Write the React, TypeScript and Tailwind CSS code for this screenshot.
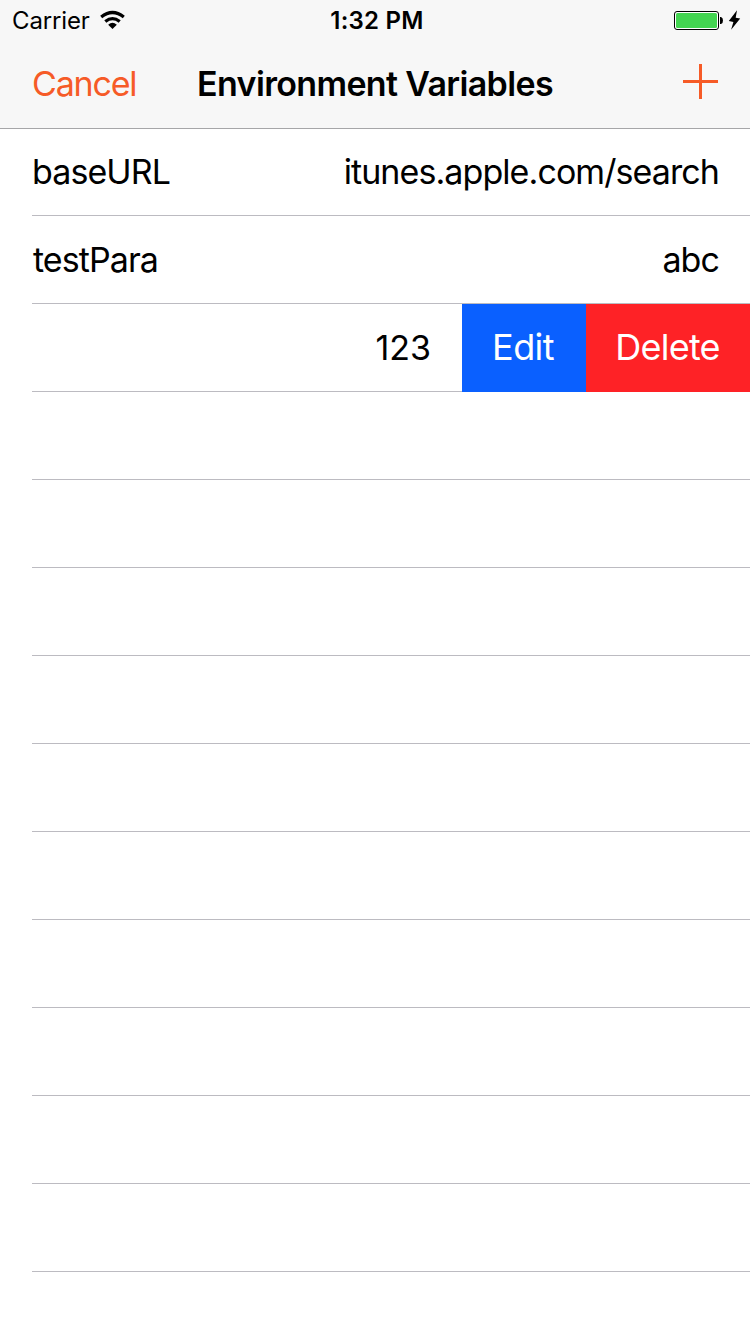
const rows = [
  { name: 'baseURL', value: 'itunes.apple.com/search' },
  { name: 'testPara', value: 'abc' },
];

export default function App() {
  return (
    <div className="flex h-[1334px] w-[750px] flex-col overflow-hidden bg-white font-['Inter',sans-serif] text-black">
      <header className="h-[129px] border-b border-[#a6a6a8] bg-[#f7f7f7]">
        <div className="grid h-10 grid-cols-3 items-center pl-3 pr-[9px]">
          <div className="flex items-center gap-[10px]">
            <span className="pt-[2px] text-[24px] leading-[38px] tracking-[-0.15px]">Carrier</span>
            <svg width="26" height="20" viewBox="100 10 26 20" fill="none" stroke="#000" strokeWidth="3.200">
              <path d="M101.200 17q11.300-9 22.600 0M105.300 21.500q7.200-5.800 14.400 0" />
              <path d="M112.500 29l-4.300-4.300q4.300-3.800 8.600 0z" fill="#000" stroke="none" />
            </svg>
          </div>
          <span className="pl-px pt-[2px] text-center text-[24px] font-semibold leading-[38px] tracking-[0.25px]">1:32 PM</span>
          <svg className="justify-self-end" width="68" height="22" viewBox="673 9 68 22">
            <rect x="674.5" y="11.5" width="44" height="18" rx="2.500" fill="#fff" stroke="#000" />
            <rect x="676" y="13" width="41" height="15" rx="1.500" fill="#43d551" />
            <path d="M720 17h1q2 .5 2 3.500t-2 3.500h-1z" />
            <path d="M737 10.200L728.800 21l4.600.9-2.300 7.900 9.100-11.200-4.500-.9z" />
          </svg>
        </div>
        <div className="grid h-[88px] grid-cols-[1fr_auto_1fr] items-center px-8">
          <span className="pb-px text-[34px] tracking-[-1.2px] text-[#f65b27]">Cancel</span>
          <h1 className="pb-px text-[34px] font-semibold tracking-[-0.65px]">Environment Variables</h1>
          <svg className="mb-[5px] justify-self-end" width="35" height="35" stroke="#f65b27" strokeWidth="3"><path d="M0 17.500h35M17.500 0v35" /></svg>
        </div>
      </header>
      <main className="flex flex-col">
        {rows.map((row, i) => (
          <div key={row.name} className={`ml-8 flex items-center justify-between border-b border-[#bcbbc1] pr-[31px] text-[34px] tracking-[-0.92px] ${i === 0 ? 'h-[87px] pb-px' : 'h-[88px] pl-px'}`}>
            <span>{row.name}</span><span>{row.value}</span>
          </div>
        ))}
        <div className="flex h-[88px] pl-8 text-[34px]">
          <div className="flex w-[430px] items-center justify-end border-b border-[#bcbbc1] pr-[31px]">123</div>
          <button className="w-[124px] bg-[#0a60ff] pb-[2px] pr-[2px] text-[36px] tracking-[-0.6px] text-white">Edit</button>
          <button className="w-[164px] bg-[#fe2226] pb-[2px] pr-px text-[36px] tracking-[-0.75px] text-white">Delete</button>
        </div>
        {Array.from({ length: 10 }, (_, i) => <div key={i} className="ml-8 h-[88px] border-b border-[#bcbbc1]" />)}
      </main>
    </div>
  );
}
